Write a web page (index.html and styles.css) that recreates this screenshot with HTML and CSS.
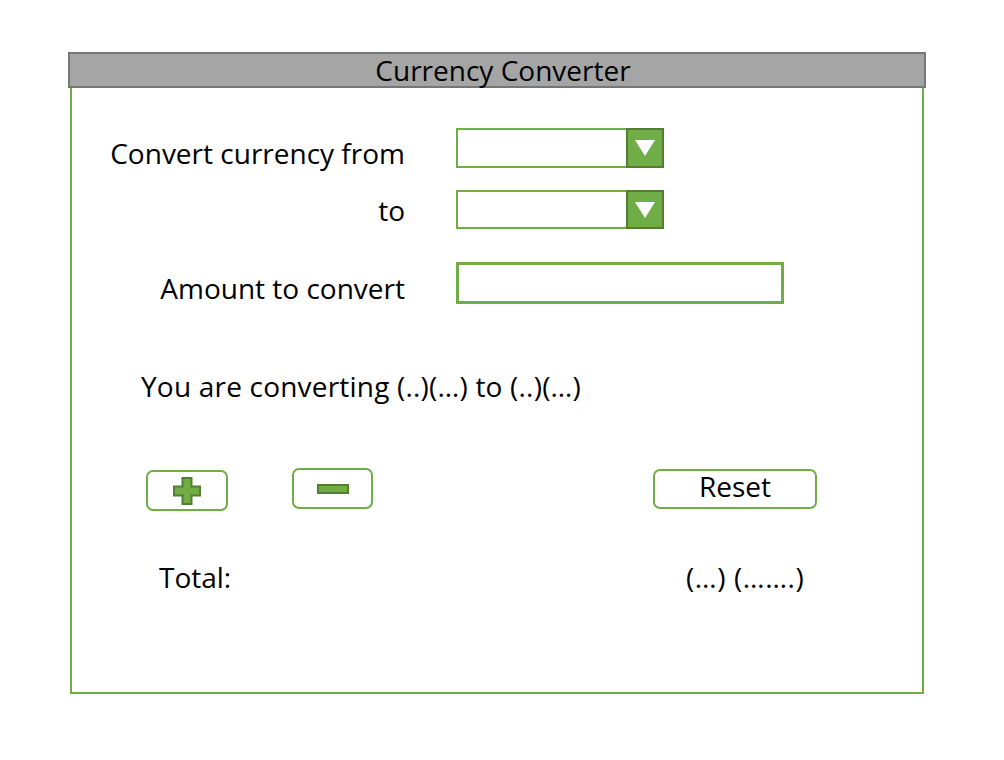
FILE: index.html
```html
<!DOCTYPE html>
<html lang="en">
<head>
<meta charset="utf-8">
<title>Currency Converter</title>
<link rel="stylesheet" href="styles.css">
</head>
<body>
<div class="app">
  <div class="title">Currency Converter</div>
  <div class="frame">
    <div class="form">
      <div class="row row-from">
        <label class="label">Convert currency from</label>
        <div class="select">
          <div class="select-field"></div>
          <div class="select-btn"><svg width="22" height="18" viewBox="0 0 22 18"><polygon points="1,1 21,1 11,17" fill="#ffffff"/></svg></div>
        </div>
      </div>
      <div class="row row-to">
        <label class="label">to</label>
        <div class="select">
          <div class="select-field"></div>
          <div class="select-btn"><svg width="22" height="18" viewBox="0 0 22 18"><polygon points="1,1 21,1 11,17" fill="#ffffff"/></svg></div>
        </div>
      </div>
      <div class="row row-amount">
        <label class="label">Amount to convert</label>
        <div class="input"></div>
      </div>
    </div>
    <p class="summary">You are converting (..)(…) to (..)(…)</p>
    <div class="buttons">
      <div class="btn btn-plus"><svg width="28" height="28" viewBox="0 0 28 28"><path d="M9.5 1 H18.5 V9.5 H27 V18.5 H18.5 V27 H9.5 V18.5 H1 V9.5 H9.5 Z" fill="#70ad47" stroke="#507e32" stroke-width="2"/></svg></div>
      <div class="btn btn-minus"><svg width="32" height="10" viewBox="0 0 32 10"><rect x="1" y="1" width="30" height="8" fill="#70ad47" stroke="#507e32" stroke-width="2"/></svg></div>
      <div class="btn btn-reset">Reset</div>
    </div>
    <div class="total">
      <span class="total-label">Total:</span>
      <span class="total-value">(…) (…….)</span>
    </div>
  </div>
</div>
</body>
</html>
```
FILE: styles.css
```css
* { box-sizing: border-box; }
html, body { margin: 0; padding: 0; background: #ffffff; }
body {
  font-family: "Open Sans", "Liberation Sans", sans-serif;
  font-size: 28px;
  color: #000000;
}
.app {
  padding: 52px 0 0 68px;
}
.title {
  width: 858px;
  height: 36px;
  background: #a5a5a5;
  border: 2px solid #767676;
  text-align: center;
  line-height: 32px;
  padding-left: 12px;
}
.frame {
  margin-left: 2px;
  width: 854px;
  height: 606px;
  border: 2px solid #70ad47;
  border-top: none;
}
.form {
  padding-top: 40px;
  display: flex;
  flex-direction: column;
}
.row {
  display: grid;
  grid-template-columns: 333px 208px;
  grid-template-rows: 40px;
  column-gap: 51px;
  align-items: start;
}
.row-to { margin-top: 22px; grid-template-rows: 39px; }
.row-amount {
  margin-top: 33px;
  grid-template-columns: 333px 328px;
  grid-template-rows: 42px;
}
.label {
  text-align: right;
  line-height: 40px;
  white-space: nowrap;
}
.row-from .label { padding-top: 5px; }
.row-to .label { padding-top: 0; }
.row-amount .label { padding-top: 6px; }
.select {
  display: flex;
  height: 39px;
  width: 208px;
}
.row-from .select { height: 40px; }
.select-field {
  flex: 1;
  border: 2px solid #70ad47;
  border-right: none;
}
.select-btn {
  width: 38px;
  background: #70ad47;
  border: 2px solid #507e32;
  display: flex;
  align-items: center;
  justify-content: center;
}
.input {
  height: 42px;
  border: 3px solid #70ad47;
}
.summary {
  margin: 62px 0 0 69px;
  line-height: 40px;
  letter-spacing: 0.2px;
}
.buttons {
  display: flex;
  align-items: flex-start;
  margin-top: 62px;
}
.btn {
  border: 2px solid #70ad47;
  border-radius: 7px;
  display: flex;
  align-items: center;
  justify-content: center;
}
.btn-plus {
  margin-left: 74px;
  margin-top: 2px;
  width: 82px;
  height: 41px;
}
.btn-minus {
  margin-left: 64px;
  width: 81px;
  height: 41px;
}
.btn-reset {
  margin-left: 280px;
  margin-top: 1px;
  width: 164px;
  height: 40px;
  line-height: 36px;
  padding-bottom: 6px;
}
.total {
  display: grid;
  grid-template-columns: 527px auto;
  padding-left: 87px;
  margin-top: 46px;
  line-height: 40px;
}
.total-value { letter-spacing: 0.6px; }
```
